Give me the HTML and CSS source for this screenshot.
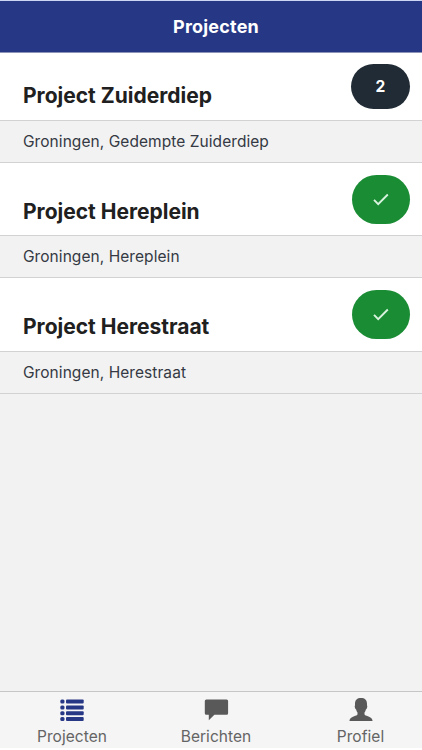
FILE: index.html
```html
<!DOCTYPE html>
<html lang="nl">
<head>
<meta charset="utf-8">
<title>Projecten</title>
<link rel="stylesheet" href="styles.css">
</head>
<body>
<div class="app">
  <header class="header"><h1>Projecten</h1></header>
  <main class="list">
    <section class="project">
      <div class="project-head first">
        <h2>Project Zuiderdiep</h2>
        <span class="badge count">2</span>
      </div>
      <p class="place">Groningen, Gedempte Zuiderdiep</p>
    </section>
    <section class="project">
      <div class="project-head">
        <h2>Project Hereplein</h2>
        <span class="badge done"><svg width="16" height="14" viewBox="0 0 16 14"><path d="M1 6.8 5.2 11.1 14.8 1.5"/></svg></span>
      </div>
      <p class="place">Groningen, Hereplein</p>
    </section>
    <section class="project">
      <div class="project-head">
        <h2>Project Herestraat</h2>
        <span class="badge done"><svg width="16" height="14" viewBox="0 0 16 14"><path d="M1 6.8 5.2 11.1 14.8 1.5"/></svg></span>
      </div>
      <p class="place">Groningen, Herestraat</p>
    </section>
  </main>
  <nav class="tabs">
    <a class="tab active">
      <svg width="24" height="24" viewBox="0 0 24 24"><rect x="0.3" y="0.6" width="4.2" height="4" rx="1.5"/><rect x="6" y="0.6" width="17.7" height="4" rx="1"/><rect x="0.3" y="6.4" width="4.2" height="4" rx="1.5"/><rect x="6" y="6.4" width="17.7" height="4" rx="1"/><rect x="0.3" y="12.2" width="4.2" height="4" rx="1.5"/><rect x="6" y="12.2" width="17.7" height="4" rx="1"/><rect x="0.3" y="18" width="4.2" height="4" rx="1.5"/><rect x="6" y="18" width="17.7" height="4" rx="1"/></svg>
      <span>Projecten</span>
    </a>
    <a class="tab">
      <svg width="24" height="24" viewBox="0 0 24 24"><path d="M2.3.4H22.6Q24.1.4 24.1 1.9V14.3Q24.1 15.8 22.6 15.8H10.4L4.8 21.2V15.8H2.3Q.8 15.8 .8 14.3V1.9Q.8 .4 2.3.4Z"/></svg>
      <span>Berichten</span>
    </a>
    <a class="tab">
      <svg width="24" height="24" viewBox="0 0 24 24"><path d="M12-1C15.8-1 18 1 18 4.8V6.6C18.5 7 18.3 8.3 17.9 9.2C17.7 9.9 17.3 10.3 16.9 10.5C16.6 11.7 16.1 12.7 15.5 13.4V14.9C15.5 15.9 16.5 16.3 17.7 16.8C21.1 18 23.3 19 23.6 22H.4C.7 19 2.9 18 6.3 16.8C7.5 16.3 8.5 15.9 8.5 14.9V13.4C7.9 12.7 7.4 11.7 7.1 10.5C6.7 10.3 6.3 9.9 6.1 9.2C5.7 8.3 5.5 7 6 6.6V4.8C6 1 8.2-1 12-1Z"/></svg>
      <span>Profiel</span>
    </a>
  </nav>
</div>
</body>
</html>
```
FILE: styles.css
```css
* { box-sizing: border-box; }
body { margin: 0; font-family: Inter, "Liberation Sans", sans-serif; background: #f2f2f2; }
h1, h2, p { margin: 0; }
.app { height: 750px; display: flex; flex-direction: column; }
.header {
  height: 53px; flex: none;
  display: flex; align-items: center; justify-content: center;
  padding-left: 10px;
  background: #263785; color: #fff;
  border-top: 1px solid #ccd5f3; border-bottom: 1px solid #8d94b5;
}
h1 { font-size: 18px; line-height: 24px; font-weight: 700; letter-spacing: .2px; }
.list { flex: 1; }
.project { height: 115px; display: flex; flex-direction: column; }
.project:first-child { height: 110px; }
.project:last-child { height: 116px; }
.project-head {
  flex: 1; display: flex; justify-content: space-between; align-items: flex-start;
  background: #fff; padding: 12px 12px 0 23px;
}
.project-head.first { padding-top: 11px; }
h2 { margin-top: 22px; font-size: 21px; line-height: 30px; font-weight: 700; color: #202020; white-space: nowrap; }
.first h2 { margin-top: 17px; }
.badge { display: flex; align-items: center; justify-content: center; color: #fff; }
.count { width: 59px; height: 45px; border-radius: 23px; background: #202b35; font-size: 15.5px; font-weight: 700; }
.done { width: 58px; height: 49px; border-radius: 25px; background: #198c34; }
.done svg { fill: none; stroke: #d9f3df; stroke-width: 1.9; }
.place {
  height: 43px; flex: none; padding-left: 23px;
  border-top: 1px solid #d2d2d4; border-bottom: 1px solid #d2d2d4;
  background: #f2f2f2; color: #343943; font-size: 15.5px; line-height: 41px; letter-spacing: .06px;
}
.tabs {
  height: 59px; flex: none;
  display: grid; grid-template-columns: 144px 144px 1fr;
  background: linear-gradient(#f5f5f5 56px, #fff 56px);
  border-top: 1px solid #c6c6c6; color: #646464; font-size: 15.5px; letter-spacing: .05px;
}
.tab { display: flex; flex-direction: column; align-items: center; padding-top: 7px; }
.tab:last-child { width: 145px; }
.tab svg { fill: #595959; overflow: visible; display: block; }
.tab.active svg { fill: #263785; }
.tab span { line-height: 20px; margin-top: 4px; }
```
